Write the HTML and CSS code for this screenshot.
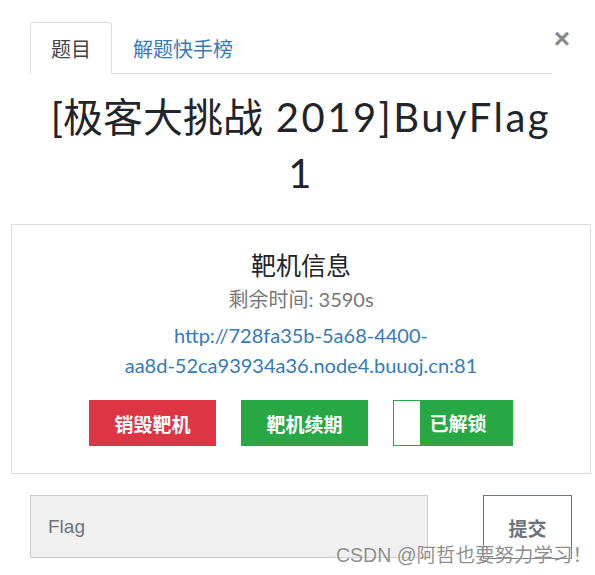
FILE: index.html
```html
<!DOCTYPE html>
<html lang="zh-CN">
<head>
    <meta charset="UTF-8">
    <title>[极客大挑战 2019]BuyFlag</title>
    <link rel="stylesheet" href="styles.css">
</head>
<body>
    <div class="modal">
        <div class="modal-header">
            <ul class="tabs">
                <li class="tab active">题目</li>
                <li class="tab">解题快手榜</li>
            </ul>
            <span class="close">&times;</span>
        </div>

        <h2 class="title">[极客大挑战<span class="latin"> 2019]BuyFlag</span><br><span class="latin">1</span></h2>

        <div class="target-box">
            <h3 class="target-title">靶机信息</h3>
            <p class="remain">剩余时间: 3590s</p>
            <a class="target-link" href="#">http://728fa35b-5a68-4400-<br>aa8d-52ca93934a36.node4.buuoj.cn:81</a>
            <div class="actions">
                <button class="btn danger">销毁靶机</button>
                <button class="btn success">靶机续期</button>
                <button class="btn unlocked"><span class="knob"></span><span class="label">已解锁</span></button>
            </div>
        </div>

        <div class="submit-row">
            <input class="flag-input" type="text" placeholder="Flag">
            <button class="submit">提交</button>
        </div>
    </div>
    <div class="watermark">CSDN @阿哲也要努力学习！</div>
</body>
</html>
```

FILE: styles.css
```css
body {
    margin: 0;
    background: #fff;
    font-family: Lato, "Noto Sans CJK SC", sans-serif;
    color: #212529;
}
.modal {
    width: 580px;
    margin-left: 11px;
    padding-top: 22px;
}
.modal-header {
    display: flex;
    align-items: flex-start;
    padding-left: 19px;
    padding-right: 20px;
}
.tabs {
    flex: 1;
    display: flex;
    list-style: none;
    margin: 0;
    padding: 0;
    border-bottom: 1px solid #ddd;
}
.tab {
    height: 50px;
    line-height: 52px;
    padding: 0 20px;
    font-size: 20px;
    color: #337ab7;
    border: 1px solid transparent;
    border-bottom: none;
    border-radius: 4px 4px 0 0;
    margin-bottom: -1px;
}
.tab.active {
    color: #444;
    background: #fff;
    border-color: #ddd;
    height: 51px;
}
.close {
    width: 18px;
    margin-left: 1px;
    margin-top: 2px;
    font-family: "Liberation Sans", sans-serif;
    font-size: 28px;
    font-weight: bold;
    line-height: 30px;
    color: #888;
    text-align: center;
}
.title {
    margin: 15px 0 23px;
    font-size: 40px;
    font-weight: 400;
    line-height: 56px;
    text-align: center;
    color: #212529;
}
.title .latin {
    letter-spacing: 2.5px;
}
.target-box {
    border: 1px solid #ddd;
    padding: 21px 0 27px;
    text-align: center;
}
.target-title {
    margin: 0;
    font-size: 25px;
    font-weight: 400;
    line-height: 38px;
}
.remain {
    margin: 0 0 6px;
    font-size: 20px;
    line-height: 30px;
    color: #777;
}
.target-link {
    display: block;
    font-size: 20px;
    line-height: 30px;
    color: #337ab7;
    text-decoration: none;
}
.actions {
    display: flex;
    justify-content: center;
    gap: 25px;
    margin-top: 20px;
}
.btn {
    width: 127px;
    height: 46px;
    border: none;
    font-family: "Noto Sans CJK SC", sans-serif;
    font-size: 19px;
    font-weight: bold;
    color: #fff;
    padding: 0;
}
.danger {
    background: #dc3545;
}
.success {
    background: #28a745;
}
.unlocked {
    width: 120px;
    display: flex;
    align-items: stretch;
    background: #28a745;
    border: 1px solid #28a745;
}
.unlocked .knob {
    width: 26px;
    background: #fff;
}
.unlocked .label {
    flex: 1;
    line-height: 44px;
    padding-right: 16px;
}
.submit-row {
    display: flex;
    justify-content: space-between;
    margin: 21px 19px 0 19px;
}
.flag-input {
    width: 398px;
    height: 63px;
    box-sizing: border-box;
    border: 1px solid #ccc;
    background: #f0f0f0;
    padding: 0 17px;
    font-family: "Liberation Sans", sans-serif;
    font-size: 19px;
    color: #495057;
}
.flag-input::placeholder {
    color: #6c757d;
}
.submit {
    width: 89px;
    height: 64px;
    border: 1px solid #6c757d;
    background: #fff;
    font-family: "Noto Sans CJK SC", sans-serif;
    font-size: 19px;
    font-weight: bold;
    color: #6c757d;
}
.watermark {
    position: absolute;
    left: 336px;
    top: 543px;
    font-family: "Liberation Sans", "Noto Sans CJK SC", sans-serif;
    font-size: 19.5px;
    line-height: 24px;
    color: rgba(120, 120, 120, 0.85);
    text-shadow: 0 0 2px #fff;
    white-space: nowrap;
}
```
